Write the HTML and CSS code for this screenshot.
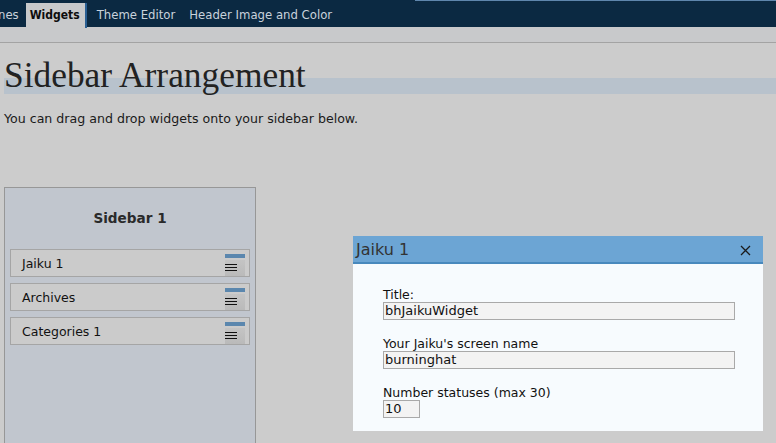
FILE: index.html
```html
<!DOCTYPE html>
<html>
<head>
<meta charset="utf-8">
<link rel="stylesheet" href="styles.css">
</head>
<body>
<div class="topbar">
  <div class="topline"></div>
  <nav class="tabs">
    <span class="tab cut">nes</span>
    <span class="tab active">Widgets</span>
    <span class="tab">Theme Editor</span>
    <span class="tab">Header Image and Color</span>
  </nav>
</div>
<div class="substrip"></div>
<main class="content">
  <h1 class="title"><span>Sidebar Arrangement</span></h1>
  <p class="intro">You can drag and drop widgets onto your sidebar below.</p>
  <div class="workspace">
    <section class="sidebar">
      <h3 class="sidebar-name">Sidebar 1</h3>
      <ul class="widgets">
        <li class="widget"><span>Jaiku 1</span><span class="handle"><i class="bar"></i><i class="grip"><svg width="12" height="8" viewBox="0 0 12 8"><path d="M0 0.5H12M0 3.5H12M0 6.5H12" stroke="#111" stroke-width="1"/></svg></i></span></li>
        <li class="widget"><span>Archives</span><span class="handle"><i class="bar"></i><i class="grip"><svg width="12" height="8" viewBox="0 0 12 8"><path d="M0 0.5H12M0 3.5H12M0 6.5H12" stroke="#111" stroke-width="1"/></svg></i></span></li>
        <li class="widget"><span>Categories 1</span><span class="handle"><i class="bar"></i><i class="grip"><svg width="12" height="8" viewBox="0 0 12 8"><path d="M0 0.5H12M0 3.5H12M0 6.5H12" stroke="#111" stroke-width="1"/></svg></i></span></li>
      </ul>
    </section>
    <div class="dialog">
      <div class="dialog-head">
        <span class="dialog-title">Jaiku 1</span>
        <svg class="close" width="11" height="11" viewBox="0 0 11 11"><path d="M1 1L10 10M10 1L1 10" stroke="#1a1a1a" stroke-width="1.3"/></svg>
      </div>
      <div class="dialog-body">
        <label class="field">Title:<span class="input wide">bhJaikuWidget</span></label>
        <label class="field">Your Jaiku's screen name<span class="input wide">burninghat</span></label>
        <label class="field">Number statuses (max 30)<span class="input small">10</span></label>
      </div>
    </div>
  </div>
</main>
</body>
</html>
```
FILE: styles.css
```css
* { box-sizing: border-box; }
html, body { margin: 0; padding: 0; }
body {
  width: 776px;
  height: 443px;
  overflow: hidden;
  background: #cccccc;
  font-family: "DejaVu Sans", Verdana, sans-serif;
  color: #1a1a1a;
  position: relative;
}
.topbar {
  height: 27px;
  background: #0b2942;
  position: relative;
}
.topline {
  position: absolute;
  left: 415px; right: 0; top: 0;
  height: 1px;
  background: #5f86ad;
}
.tabs {
  display: flex;
  height: 27px;
  align-items: flex-end;
  font-size: 11.7px;
}
.tab {
  color: #c9d2dc;
  padding: 0 7px;
  height: 24px;
  line-height: 24px;
}
.tab.cut { margin-left: -9px; padding-right: 7px; }
.tab.active {
  background: #c8c9cb;
  color: #0d0d0d;
  font-family: "DejaVu Sans Condensed", "DejaVu Sans", sans-serif;
  font-stretch: semi-condensed;
  font-weight: bold;
  font-size: 12px;
  height: 25px;
  margin-bottom: -1px;
  padding: 0 5px 0 4px;
  border-right: 2px solid #2a5f93;
  margin-right: 3px;
}
.substrip {
  height: 16px;
  background: #c8c9cb;
  border-bottom: 1px solid #a3a3a3;
}
.content { padding: 0 0 0 4px; }
.title {
  margin: 12px 0 0;
  padding: 0;
  font-family: "Liberation Serif", "Times New Roman", serif;
  font-weight: normal;
  font-size: 35.4px;
  line-height: 40px;
  height: 40px;
  color: #222;
  background: linear-gradient(to bottom, transparent 23px, #b8c2cc 23px, #b8c2cc 39px, transparent 39px);
}
.intro {
  margin: 16px 0 0;
  font-size: 12.6px;
  line-height: 16px;
}
.workspace {
  display: flex;
  align-items: flex-start;
  margin-top: 60px;
}
.sidebar {
  width: 252px;
  height: 270px;
  background: #c1c6ce;
  border: 1px solid #979797;
  border-bottom: none;
  padding: 0 5px;
}
.sidebar-name {
  margin: 20px 0 21px;
  text-align: center;
  font-size: 13.6px;
  line-height: 20px;
  font-weight: bold;
  color: #2a2a2a;
}
.widgets { list-style: none; margin: 0; padding: 0; display: flex; flex-direction: column; gap: 6px; }
.widget {
  height: 28px;
  border: 1px solid #a5a5a5;
  background: #cbcbcb;
  display: flex;
  align-items: center;
  justify-content: space-between;
  padding: 0 4px 0 11px;
  font-size: 12.5px;
  color: #111;
}
.handle {
  display: flex;
  flex-direction: column;
  align-self: flex-start;
  padding-top: 4px;
  width: 20px;
}
.handle i { display: block; }
.bar { height: 4px; background: #5b87ae; }
.grip {
  height: 16px;
  margin-top: 2px;
  background: linear-gradient(#c4c4c4, #bababa);
  display: flex;
  align-items: center;
  justify-content: center;
}
.dialog {
  margin-left: 97px;
  margin-top: 49px;
  width: 410px;
  background: #f7fbfe;
}
.dialog-head {
  height: 28px;
  background: #6ca5d4;
  border-bottom: 2px solid #4889bd;
  display: flex;
  align-items: center;
  justify-content: space-between;
  padding: 0 12px 0 3px;
}
.dialog-title {
  font-size: 16px;
  color: #333;
}
.close { margin-top: 2px; }
.dialog-body {
  padding: 23px 0 13px 30px;
  display: flex;
  flex-direction: column;
  gap: 16px;
}
.field {
  display: flex;
  flex-direction: column;
  font-size: 12.5px;
  line-height: 15px;
  color: #111;
}
.input {
  display: block;
  height: 18px;
  border: 1px solid #a9a9a9;
  background: #f3f3f3;
  padding: 0 1px;
  line-height: 16px;
  font-size: 13px;
}
.input.wide { width: 352px; }
.input.small { width: 37px; }
```
